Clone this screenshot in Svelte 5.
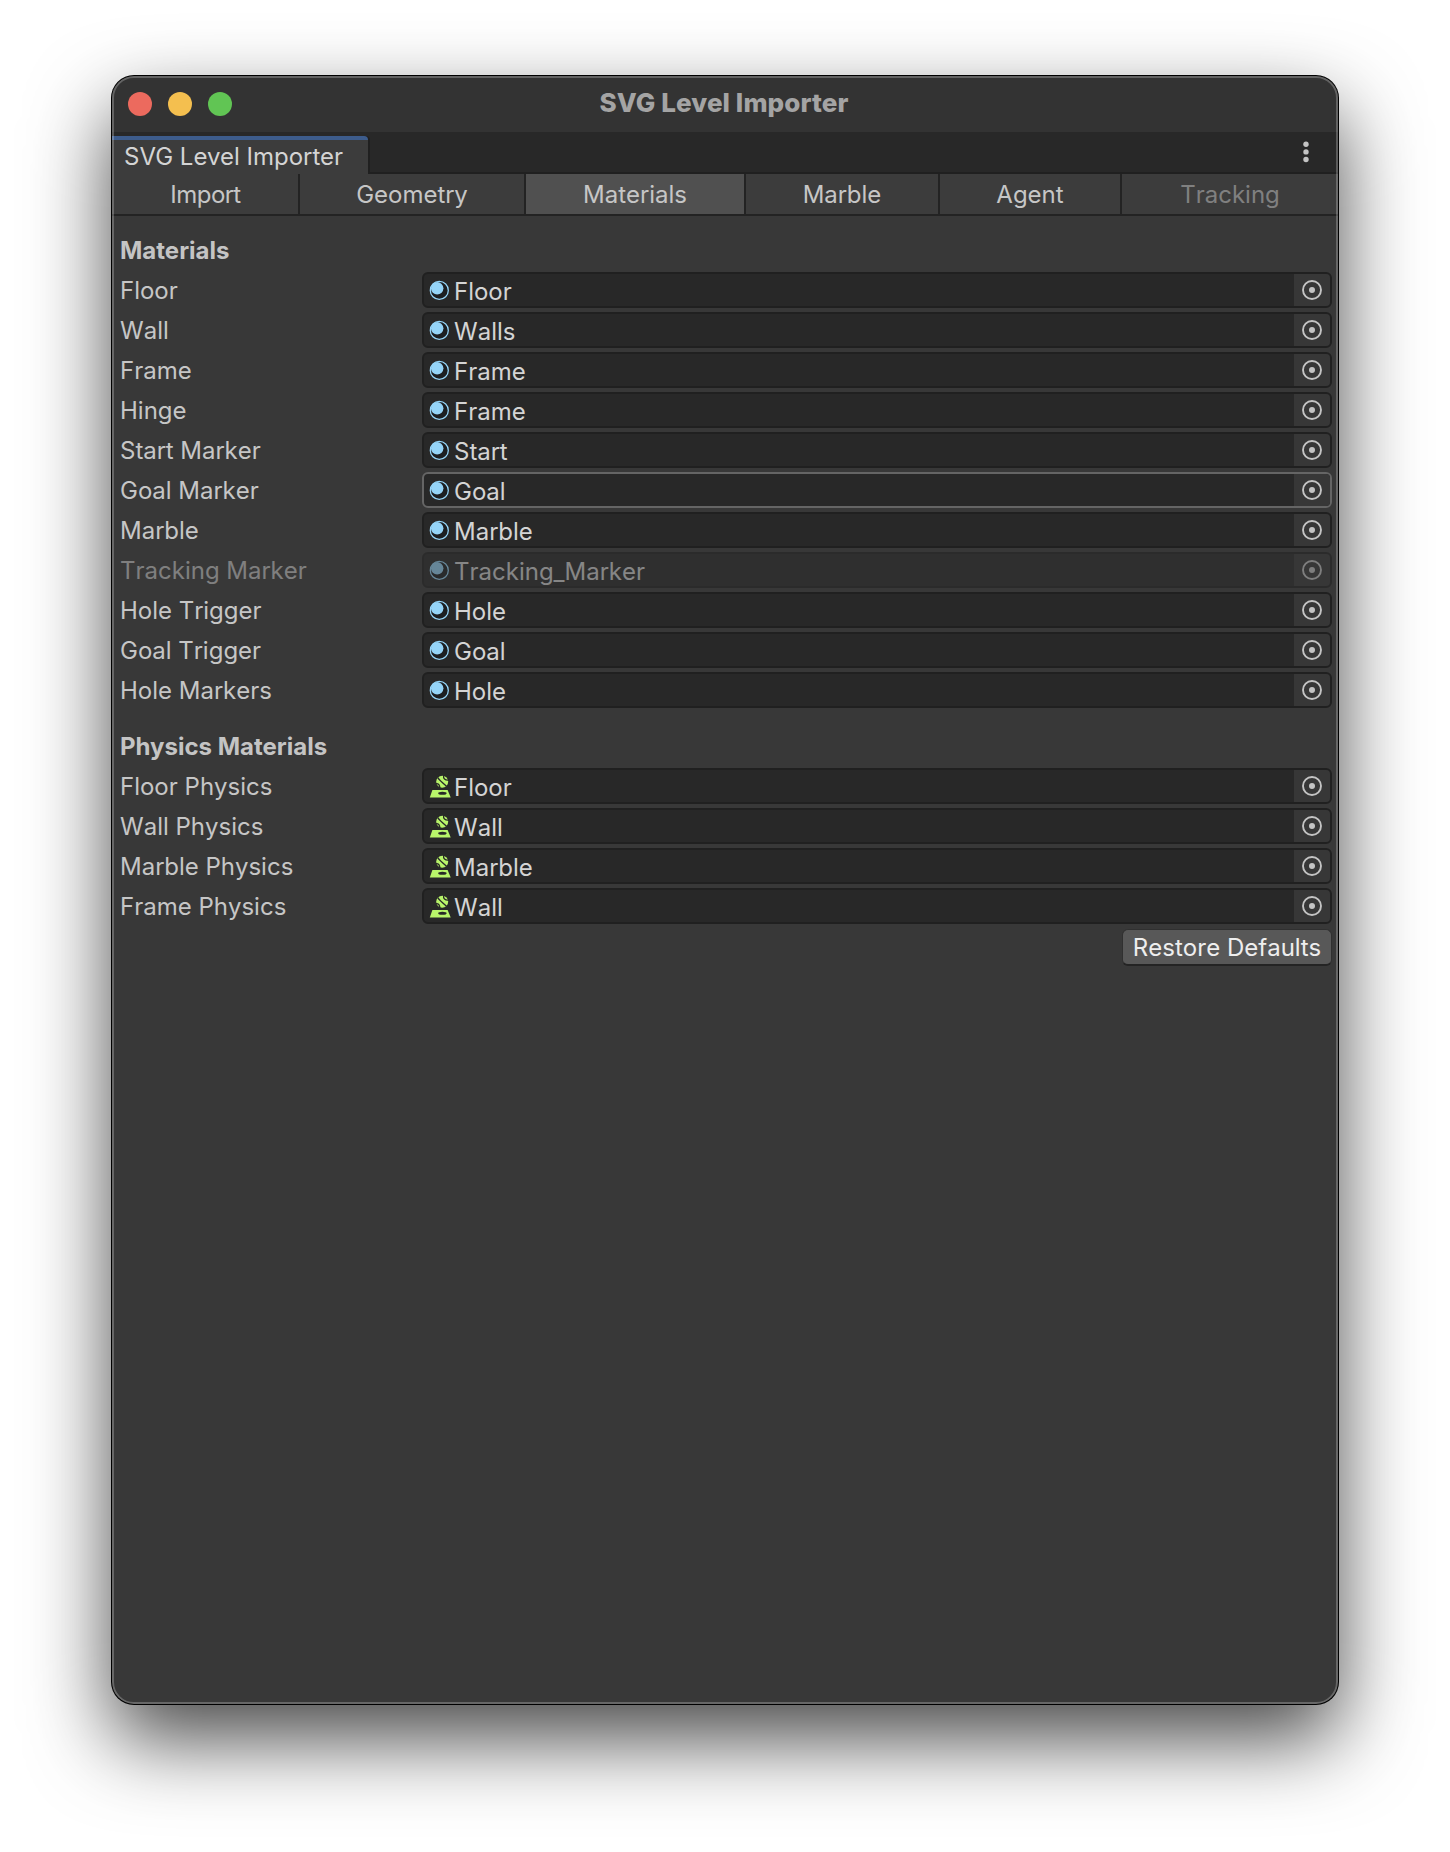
<script>
  const tabs = [
    { name: 'Import', width: 188, narrow: true },
    { name: 'Geometry', width: 226 },
    { name: 'Materials', width: 220, active: true },
    { name: 'Marble', width: 194 },
    { name: 'Agent', width: 182 },
    { name: 'Tracking', width: 216, disabled: true },
  ];
  const groups = [
    {
      title: 'Materials',
      icon: 'sphere',
      rows: [
        { label: 'Floor', value: 'Floor' },
        { label: 'Wall', value: 'Walls' },
        { label: 'Frame', value: 'Frame' },
        { label: 'Hinge', value: 'Frame' },
        { label: 'Start Marker', value: 'Start' },
        { label: 'Goal Marker', value: 'Goal', hover: true },
        { label: 'Marble', value: 'Marble' },
        { label: 'Tracking Marker', value: 'Tracking_Marker', disabled: true },
        { label: 'Hole Trigger', value: 'Hole' },
        { label: 'Goal Trigger', value: 'Goal' },
        { label: 'Hole Markers', value: 'Hole' },
      ],
    },
    {
      title: 'Physics Materials',
      icon: 'physics',
      rows: [
        { label: 'Floor Physics', value: 'Floor' },
        { label: 'Wall Physics', value: 'Wall' },
        { label: 'Marble Physics', value: 'Marble' },
        { label: 'Frame Physics', value: 'Wall' },
      ],
    },
  ];
</script>

<main class="desktop">
  <section class="window">
    <header class="titlebar">
      <div class="lights">
        <span class="light red"></span>
        <span class="light yellow"></span>
        <span class="light green"></span>
      </div>
      <h1>SVG Level Importer</h1>
    </header>

    <div class="dock">
      <div class="dock-tab"><span>SVG Level Importer</span></div>
      <svg class="menu" width="8" height="22" viewBox="0 0 8 22">
        <circle cx="4" cy="3.3" r="2.7" /><circle cx="4" cy="10.9" r="2.7" /><circle cx="4" cy="18.5" r="2.7" />
      </svg>
    </div>

    <nav class="toolbar">
      {#each tabs as tab}
        <button class="tab" class:active={tab.active} class:narrow={tab.narrow} class:disabled={tab.disabled} style:width="{tab.width}px">{tab.name}</button>
      {/each}
    </nav>

    <div class="content">
      {#each groups as group}
        <h2>{group.title}</h2>
        {#each group.rows as row}
          <div class="row" class:disabled={row.disabled}>
            <span class="label">{row.label}</span>
            <div class="field" class:hover={row.hover}>
              {#if group.icon === 'sphere'}
                <svg class="icon" width="23" height="23" viewBox="0 0 23 23">
                  <circle cx="11.3" cy="11.4" r="9" fill="#1c1f22" stroke="#94d4f8" stroke-width="1.3" />
                  <circle cx="9.2" cy="9.3" r="6.2" fill="#94d4f8" />
                </svg>
              {:else}
                <svg class="icon" width="23" height="23" viewBox="0 0 23 23">
                  <circle cx="14.2" cy="6.8" r="6" fill="#b8f46a" />
                  <path d="M9.6 2.4C11.6 5.6 15.2 8.4 18.6 11.2M7.8 8.6C10.4 8.2 11.8 9.8 11.9 13M15.6 .4C15 3.4 17 5.4 20.6 5" fill="none" stroke="#282828" stroke-width="1.3" />
                  <path d="M4.4 15H19.6L22.7 22.4H1.8Z" fill="#b8f46a" />
                  <ellipse cx="14.4" cy="18.2" rx="4.2" ry="1.5" fill="#282828" />
                </svg>
              {/if}
              <span class="value">{row.value}</span>
              <span class="picker">
                <svg width="20" height="20" viewBox="0 0 20 20">
                  <circle cx="10" cy="10" r="9" fill="none" stroke="#c4c4c4" stroke-width="1.9" />
                  <circle cx="10" cy="10" r="3" fill="#c4c4c4" />
                </svg>
              </span>
            </div>
          </div>
        {/each}
      {/each}
      <button class="restore">Restore Defaults</button>
    </div>
  </section>
</main>

<style>
  :global(body) {
    margin: 0;
    background: #fff;
  }
  .desktop {
    box-sizing: border-box;
    width: 1450px;
    height: 1852px;
    padding: 76px 112px 148px;
    overflow: hidden;
    font-family: Inter, 'Liberation Sans', sans-serif;
    font-size: 24px;
    font-weight: 370;
    font-kerning: none;
    color: #c6c6c6;
  }
  .window {
    position: relative;
    height: 1628px;
    border-radius: 22px;
    background: #383838;
    overflow: hidden;
    box-shadow: 0 0 0 1px #000, 0 35px 82px rgba(0, 0, 0, 0.72);
  }
  .window::after {
    content: '';
    position: absolute;
    inset: 0;
    border: 2px solid rgba(255, 255, 255, 0.24);
    border-radius: 22px;
    pointer-events: none;
  }
  .titlebar {
    display: grid;
    grid-template-columns: 1fr auto 1fr;
    align-items: center;
    height: 56px;
    background: #333;
  }
  .lights {
    display: flex;
    gap: 16px;
    padding-left: 16px;
  }
  .light {
    width: 24px;
    height: 24px;
    border-radius: 50%;
  }
  .red { background: #ec6a5e; }
  .yellow { background: #f4bf4f; }
  .green { background: #61c554; }
  h1 {
    margin: 0;
    padding: 0 2px 2px 0;
    font-size: 26px;
    font-weight: 780;
    font-kerning: normal;
    line-height: 52px;
    letter-spacing: 0.1px;
    color: #a4a4a4;
  }
  .dock {
    display: flex;
    justify-content: space-between;
    height: 42px;
    background: linear-gradient(#282828 40px, #202020 40px);
  }
  .dock-tab {
    box-sizing: border-box;
    width: 256px;
    height: 38px;
    margin-top: 4px;
    padding-left: 12px;
    border-top: 4px solid #3d5c8c;
    border-radius: 0 4px 0 0;
    background: #3c3c3c;
    box-shadow: 2px 0 #202020;
    font-kerning: normal;
    line-height: 34px;
    color: #d4d4d4;
  }
  .menu {
    margin: 9px 28px 0 0;
    fill: #c4c4c4;
  }
  .toolbar {
    display: flex;
    height: 40px;
    border-bottom: 2px solid #232323;
  }
  button {
    box-sizing: border-box;
    padding: 0;
    border: 0;
    font: inherit;
    color: inherit;
  }
  .tab {
    flex: none;
    border-right: 2px solid #232323;
    background: #3c3c3c;
  }
  .tab:last-child { border-right: 0; }
  .tab.active { background: #505050; }
  .tab.narrow {
    padding-left: 1px;
    letter-spacing: -0.5px;
  }
  .tab.disabled { color: #808080; }
  .content {
    display: flex;
    flex-direction: column;
    padding: 16px 6px 0 8px;
  }
  h2 {
    margin: 0;
    height: 38px;
    font-size: 24px;
    font-weight: 700;
    font-kerning: normal;
    line-height: 38px;
    color: #c4c4c4;
  }
  .row + h2 { margin-top: 18px; }
  .row {
    display: flex;
    align-items: center;
    height: 36px;
    margin-top: 2px;
    margin-bottom: 2px;
  }
  .label { width: 302px; }
  .field {
    box-sizing: border-box;
    flex: 1;
    display: flex;
    align-items: center;
    height: 36px;
    padding-left: 4px;
    border: 2px solid #202020;
    border-radius: 6px;
    background: #282828;
    overflow: hidden;
  }
  .field.hover { border-color: #656565; }
  .value {
    flex: 1;
    padding: 2px 0 0 3px;
    color: #d4d4d4;
  }
  .picker {
    display: flex;
    align-items: center;
    justify-content: center;
    width: 36px;
    height: 32px;
    background: #373737;
  }
  .row.disabled .label,
  .row.disabled .field { opacity: 0.5; }
  .restore {
    align-self: flex-end;
    width: 210px;
    height: 37px;
    margin-top: 3px;
    border: 1px solid #303030;
    border-bottom: 2px solid #242424;
    border-radius: 6px;
    background: #585858;
    color: #eee;
  }
</style>
